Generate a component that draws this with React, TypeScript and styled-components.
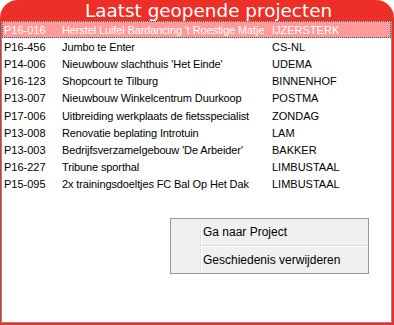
import React from "react";
import styled, { createGlobalStyle } from "styled-components";

const Global = createGlobalStyle`
  html, body { margin: 0; padding: 0; background: #fff; }
  body { font-family: Tahoma, "DejaVu Sans", sans-serif; }
`;

const Frame = styled.div`
  width: 394px;
  height: 325px;
  box-sizing: border-box;
  background: #ee2f27;
  border-radius: 18px 18px 0 0;
  display: flex;
  flex-direction: column;
  padding: 0 2px 2px 1px;
`;

const Header = styled.div`
  height: 21px;
  flex: none;
  color: #fff;
  font-family: "DejaVu Sans", Verdana, sans-serif;
  font-size: 18.4px;
  line-height: 21px;
  padding-left: 84px;
  white-space: nowrap;
`;

const ListBox = styled.div`
  flex: 1;
  background: #fff;
  border: 1px solid #8e8e8e;
  border-top: none;
  position: relative;
  display: flex;
  flex-direction: column;
`;

const Row = styled.div<{ $selected?: boolean }>`
  display: grid;
  grid-template-columns: 58px 210px 1fr;
  height: 17.2px;
  align-items: center;
  box-sizing: border-box;
  padding-left: 2px;
  font-family: "Liberation Sans", Arial, sans-serif;
  font-size: 11px;
  color: ${(p) => (p.$selected ? "#fff" : "#000")};
  background: ${(p) => (p.$selected ? "#ff9a9a" : "transparent")};
  outline: ${(p) => (p.$selected ? "1px dotted #2a6a6a" : "none")};
  outline-offset: -1px;
  white-space: nowrap;
`;

const Cell = styled.span<{ $tight?: boolean }>`
  overflow: hidden;
  letter-spacing: ${(p) => (p.$tight ? "-0.12px" : "0")};
`;

const Menu = styled.div`
  position: absolute;
  left: 168px;
  top: 197px;
  width: 199px;
  height: 56px;
  box-sizing: border-box;
  background: #f0f0f0;
  border: 1px solid #979797;
  display: flex;
  flex-direction: column;
`;

const Gutter = styled.div`
  position: absolute;
  left: 29px;
  top: 2px;
  bottom: 2px;
  width: 1px;
  background: #e2e3e3;
  border-right: 1px solid #fff;
`;

const MenuItem = styled.div`
  height: 26px;
  display: flex;
  align-items: center;
  padding-left: 32px;
  font-family: "Liberation Sans", Arial, sans-serif;
  font-size: 12px;
  color: #000;
`;

const MenuSep = styled.div`
  height: 1px;
  margin: 0 1px 0 30px;
  background: #d7d7d7;
  border-bottom: 1px solid #fff;
`;

const rows = [
  ["P16-016", "Herstel Luifel Bardancing 't Roestige Matje", "IJZERSTERK"],
  ["P16-456", "Jumbo te Enter", "CS-NL"],
  ["P14-006", "Nieuwbouw slachthuis 'Het Einde'", "UDEMA"],
  ["P16-123", "Shopcourt te Tilburg", "BINNENHOF"],
  ["P13-007", "Nieuwbouw Winkelcentrum Duurkoop", "POSTMA"],
  ["P17-006", "Uitbreiding werkplaats de fietsspecialist", "ZONDAG"],
  ["P13-008", "Renovatie beplating Introtuin", "LAM"],
  ["P13-003", "Bedrijfsverzamelgebouw 'De Arbeider'", "BAKKER"],
  ["P16-227", "Tribune sporthal", "LIMBUSTAAL"],
  ["P15-095", " 2x trainingsdoeltjes FC Bal Op Het Dak", "LIMBUSTAAL"],
];

export default function App() {
  return (
    <>
      <Global />
      <Frame>
        <Header>Laatst geopende projecten</Header>
        <ListBox>
          {rows.map((r, i) => (
            <Row key={r[0]} $selected={i === 0}>
              <Cell>{r[0]}</Cell>
              <Cell $tight>{r[1]}</Cell>
              <Cell>{r[2]}</Cell>
            </Row>
          ))}
          <Menu>
            <Gutter />
            <MenuItem>Ga naar Project</MenuItem>
            <MenuSep />
            <MenuItem>Geschiedenis verwijderen</MenuItem>
          </Menu>
        </ListBox>
      </Frame>
    </>
  );
}
